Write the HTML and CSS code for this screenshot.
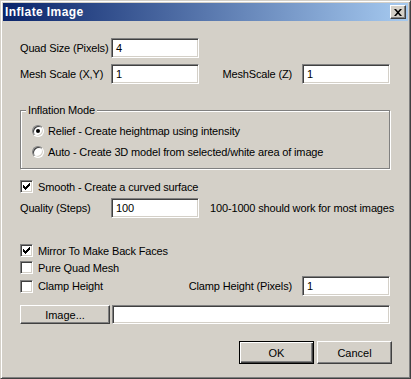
FILE: index.html
```html
<!DOCTYPE html>
<html lang="en">
<head>
    <meta charset="UTF-8">
    <title>Inflate Image</title>
    <link rel="stylesheet" href="styles.css">
</head>
<body>

    <div class="window">
        <div class="titlebar">
            <span class="title">Inflate Image</span>
            <button class="close-btn" title="Close">
                <svg width="8" height="7" viewBox="0 0 8 7">
                    <path d="M0 0h2l2 2.3 2-2.3h2l-3 3.5 3 3.5h-2l-2-2.3-2 2.3h-2l3-3.5z" fill="#000"/>
                </svg>
            </button>
        </div>

        <div class="dialog">
            <div class="row row-quad">
                <span class="label">Quad Size (Pixels)</span>
                <div class="field">4</div>
            </div>

            <div class="row row-mesh">
                <span class="label">Mesh Scale (X,Y)</span>
                <div class="field">1</div>
                <div class="right-group">
                    <span>MeshScale (Z)</span>
                    <div class="field">1</div>
                </div>
            </div>

            <div class="groupbox">
                <div class="groupbox-title">Inflation Mode</div>
                <div class="option option-first">
                    <span class="radio checked"></span>
                    <span>Relief - Create heightmap using intensity</span>
                </div>
                <div class="option">
                    <span class="radio"></span>
                    <span>Auto - Create 3D model from selected/white area of image</span>
                </div>
            </div>

            <div class="check-row row-smooth">
                <span class="checkbox checked">
                    <svg width="9" height="9" viewBox="0 0 9 9"><path d="M1 3h1v3h-1zM2 4h1v3h-1zM3 5h1v3h-1zM4 4h1v3h-1zM5 3h1v3h-1zM6 2h1v3h-1zM7 1h1v3h-1z" fill="#000"/></svg>
                </span>
                <span>Smooth - Create a curved surface</span>
            </div>

            <div class="row row-quality">
                <span class="label">Quality (Steps)</span>
                <div class="field">100</div>
                <span class="hint">100-1000 should work for most images</span>
            </div>

            <div class="check-row row-mirror">
                <span class="checkbox checked">
                    <svg width="9" height="9" viewBox="0 0 9 9"><path d="M1 3h1v3h-1zM2 4h1v3h-1zM3 5h1v3h-1zM4 4h1v3h-1zM5 3h1v3h-1zM6 2h1v3h-1zM7 1h1v3h-1z" fill="#000"/></svg>
                </span>
                <span>Mirror To Make Back Faces</span>
            </div>

            <div class="check-row">
                <span class="checkbox"></span>
                <span>Pure Quad Mesh</span>
            </div>

            <div class="row check-row row-clamp">
                <span class="checkbox"></span>
                <span>Clamp Height</span>
                <div class="right-group">
                    <span>Clamp Height (Pixels)</span>
                    <div class="field">1</div>
                </div>
            </div>

            <div class="row row-image">
                <button class="btn btn-image">Image...</button>
                <div class="field field-wide"></div>
            </div>

            <div class="row row-buttons">
                <button class="btn btn-default">OK</button>
                <button class="btn">Cancel</button>
            </div>
        </div>
    </div>

</body>
</html>
```

FILE: styles.css
```css
body {
    margin: 0;
    padding: 0;
    font-family: 'Liberation Sans', Arial, sans-serif;
    font-size: 11px;
    letter-spacing: -0.15px;
    white-space: nowrap;
    color: #000;
    background-color: #d4d0c8;
}

.window {
    width: 411px;
    height: 379px;
    box-sizing: border-box;
    border: 1px solid;
    border-color: #d4d0c8 #404040 #404040 #d4d0c8;
    box-shadow: inset 1px 1px 0 #fff, inset -1px -1px 0 #808080;
    padding: 2px;
    background-color: #d4d0c8;
    overflow: hidden;
}

.titlebar {
    height: 18px;
    display: flex;
    align-items: center;
    justify-content: space-between;
    background: linear-gradient(to right, #0a246a, #a6caf0);
}

.title {
    padding-left: 2px;
    color: #fff;
    font-weight: bold;
    font-size: 12px;
    letter-spacing: 0.4px;
}

.close-btn {
    width: 16px;
    height: 14px;
    margin-right: 2px;
    padding: 0;
    box-sizing: border-box;
    display: flex;
    align-items: center;
    justify-content: center;
    background-color: #d4d0c8;
    border: 1px solid;
    border-color: #fff #404040 #404040 #fff;
    box-shadow: inset -1px -1px 0 #808080;
}

.dialog {
    padding: 0 18px 0 17px;
}

.row {
    display: flex;
    align-items: center;
    height: 20px;
}

.row > * {
    flex-shrink: 0;
}

.label {
    width: 91px;
}

.field {
    width: 88px;
    height: 20px;
    box-sizing: border-box;
    padding: 0 4px;
    line-height: 18px;
    background-color: #fff;
    border: 1px solid;
    border-color: #808080 #fff #fff #808080;
    box-shadow: inset 1px 1px 0 #404040, inset -1px -1px 0 #d4d0c8;
}

.right-group {
    margin-left: auto;
    display: flex;
    align-items: center;
    gap: 10px;
}

.row-quad {
    margin-top: 17px;
}

.row-mesh {
    margin-top: 6px;
}

/* Group box */
.groupbox {
    margin-top: 26px;
    padding: 0 0 8px 11px;
    border: 1px solid #808080;
    box-shadow: 1px 1px 0 #fff, inset 1px 1px 0 #fff;
}

.groupbox-title {
    width: fit-content;
    margin: -7px 0 0 -6px;
    padding: 0 2px;
    line-height: 13px;
    background-color: #d4d0c8;
}

.option {
    display: flex;
    align-items: center;
    gap: 4px;
    height: 17px;
    margin-top: 4px;
}

.option-first {
    margin-top: 5px;
}

.radio {
    width: 12px;
    height: 12px;
    box-sizing: border-box;
    border-radius: 50%;
    border: 1px solid;
    border-color: #808080 #fff #fff #808080;
    box-shadow: inset 1px 1px 0 #404040, inset -1px -1px 0 #d4d0c8;
    background-color: #fff;
    display: flex;
    align-items: center;
    justify-content: center;
}

.radio.checked::after {
    content: '';
    width: 4px;
    height: 4px;
    border-radius: 50%;
    background-color: #000;
}

/* Check boxes */
.check-row {
    display: flex;
    align-items: center;
    gap: 5px;
    height: 17px;
}

.checkbox {
    width: 13px;
    height: 13px;
    flex-shrink: 0;
    box-sizing: border-box;
    background-color: #fff;
    border: 1px solid;
    border-color: #808080 #fff #fff #808080;
    box-shadow: inset 1px 1px 0 #404040, inset -1px -1px 0 #d4d0c8;
    display: flex;
    align-items: center;
    justify-content: center;
}

.checkbox svg {
    shape-rendering: crispEdges;
}

.row-smooth {
    margin-top: 9px;
}

.row-quality {
    margin-top: 3px;
}

.hint {
    margin-left: 11px;
}

.row-mirror {
    margin-top: 24px;
}

.row-clamp {
    height: 20px;
}

/* Buttons */
.btn {
    box-sizing: border-box;
    padding: 0;
    font: inherit;
    color: #000;
    background-color: #d4d0c8;
    border: 1px solid;
    border-color: #fff #404040 #404040 #fff;
    box-shadow: inset -1px -1px 0 #808080;
    width: 75px;
    height: 23px;
}

.btn-default {
    border: 1px solid #000;
    box-shadow: inset 1px 1px 0 #fff, inset -1px -1px 0 #404040, inset -2px -2px 0 #808080;
}

.row-image {
    margin-top: 9px;
    height: 19px;
}

.btn-image {
    width: 90px;
    height: 19px;
}

.row-image .field-wide {
    flex: 1;
    width: auto;
    height: 19px;
    margin-left: 2px;
}

.row-buttons {
    margin-top: 17px;
    margin-right: -2px;
    height: 23px;
    justify-content: flex-end;
    gap: 3px;
}
```
